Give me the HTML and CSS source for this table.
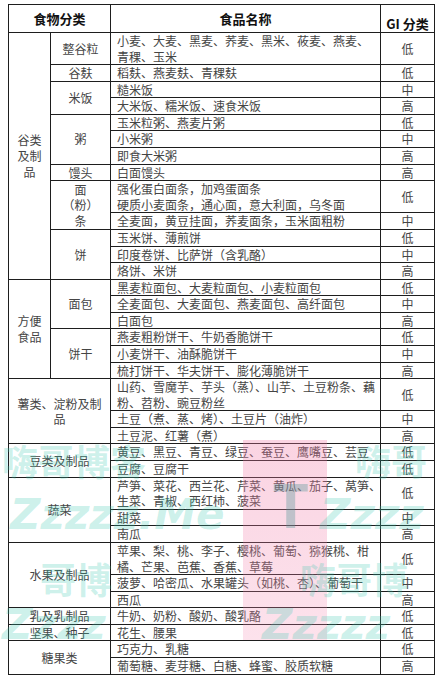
FILE: index.html
```html
<!DOCTYPE html>
<html lang="zh-CN">
<head>
<meta charset="utf-8">
<title>食物GI分类</title>
<link rel="stylesheet" href="styles.css">
</head>
<body>
<div class="page">
<table class="gi">
<colgroup><col class="w1"><col class="w2"><col class="w3"><col class="w4"></colgroup>
<thead>
<tr class="hr"><th colspan="2" class="ht">食物分类</th><th class="ht">食品名称</th><th class="hm">GI 分类</th></tr>
</thead>
<tbody>
<tr><td rowspan="13" class="c">谷类<br>及制<br>品</td><td class="c">整谷粒</td><td class="n"><span class="l">小麦、大麦、黑麦、荞麦、黑米、莜麦、燕麦、</span><span class="l">青稞、玉米</span></td><td class="g">低</td></tr>
<tr><td class="c">谷麸</td><td class="n">稻麸、燕麦麸、青稞麸</td><td class="g">低</td></tr>
<tr><td rowspan="2" class="c">米饭</td><td class="n">糙米饭</td><td class="g">中</td></tr>
<tr><td class="n">大米饭、糯米饭、速食米饭</td><td class="g">高</td></tr>
<tr><td rowspan="3" class="c">粥</td><td class="n">玉米粒粥、燕麦片粥</td><td class="g">低</td></tr>
<tr><td class="n">小米粥</td><td class="g">中</td></tr>
<tr><td class="n">即食大米粥</td><td class="g">高</td></tr>
<tr><td class="c">馒头</td><td class="n">白面馒头</td><td class="g">高</td></tr>
<tr><td rowspan="2" class="c">面<br>（粉）<br>条</td><td class="n"><span class="l">强化蛋白面条，加鸡蛋面条</span><span class="l">硬质小麦面条，通心面，意大利面，乌冬面</span></td><td class="g">低</td></tr>
<tr><td class="n">全麦面，黄豆挂面，荞麦面条，玉米面粗粉</td><td class="g">中</td></tr>
<tr><td rowspan="3" class="c">饼</td><td class="n">玉米饼、薄煎饼</td><td class="g">低</td></tr>
<tr><td class="n">印度卷饼、比萨饼（含乳酪）</td><td class="g">中</td></tr>
<tr><td class="n">烙饼、米饼</td><td class="g">高</td></tr>
<tr><td rowspan="6" class="c">方便<br>食品</td><td rowspan="3" class="c">面包</td><td class="n">黑麦粒面包、大麦粒面包、小麦粒面包</td><td class="g">低</td></tr>
<tr><td class="n">全麦面包、大麦面包、燕麦面包、高纤面包</td><td class="g">中</td></tr>
<tr><td class="n">白面包</td><td class="g">高</td></tr>
<tr><td rowspan="3" class="c">饼干</td><td class="n">燕麦粗粉饼干、牛奶香脆饼干</td><td class="g">低</td></tr>
<tr><td class="n">小麦饼干、油酥脆饼干</td><td class="g">中</td></tr>
<tr><td class="n">梳打饼干、华夫饼干、膨化薄脆饼干</td><td class="g">高</td></tr>
<tr><td rowspan="3" colspan="2" class="c">薯类、淀粉及制<br>品</td><td class="n"><span class="l">山药、雪魔芋、芋头（蒸）、山芋、土豆粉条、藕</span><span class="l">粉、苕粉、豌豆粉丝</span></td><td class="g">低</td></tr>
<tr><td class="n">土豆（煮、蒸、烤）、土豆片（油炸）</td><td class="g">中</td></tr>
<tr><td class="n">土豆泥、红薯（煮）</td><td class="g">高</td></tr>
<tr><td rowspan="2" colspan="2" class="c">豆类及制品</td><td class="n">黄豆、黑豆、青豆、绿豆、蚕豆、鹰嘴豆、芸豆</td><td class="g">低</td></tr>
<tr><td class="n">豆腐、豆腐干</td><td class="g">低</td></tr>
<tr><td rowspan="3" colspan="2" class="c">蔬菜</td><td class="n"><span class="l">芦笋、菜花、西兰花、芹菜、黄瓜、茄子、莴笋、</span><span class="l">生菜、青椒、西红柿、菠菜</span></td><td class="g">低</td></tr>
<tr><td class="n">甜菜</td><td class="g">中</td></tr>
<tr><td class="n">南瓜</td><td class="g">高</td></tr>
<tr><td rowspan="3" colspan="2" class="c">水果及制品</td><td class="n"><span class="l">苹果、梨、桃、李子、樱桃、葡萄、猕猴桃、柑</span><span class="l">橘、芒果、芭蕉、香蕉、草莓</span></td><td class="g">低</td></tr>
<tr><td class="n">菠萝、哈密瓜、水果罐头（如桃、杏）、葡萄干</td><td class="g">中</td></tr>
<tr><td class="n">西瓜</td><td class="g">高</td></tr>
<tr><td colspan="2" class="c">乳及乳制品</td><td class="n">牛奶、奶粉、酸奶、酸乳酪</td><td class="g">低</td></tr>
<tr><td colspan="2" class="c">坚果、种子</td><td class="n">花生、腰果</td><td class="g">低</td></tr>
<tr><td rowspan="2" colspan="2" class="c">糖果类</td><td class="n">巧克力、乳糖</td><td class="g">低</td></tr>
<tr><td class="n">葡萄糖、麦芽糖、白糖、蜂蜜、胶质软糖</td><td class="g">高</td></tr>
</tbody>
</table>
<div class="wm" aria-hidden="true">
<div class="pink"></div>
<span class="wt t1">嗨哥博客</span>
<span class="wt t2">嗨哥</span>
<span class="wt t3">T</span>
<span class="wz z1">Zzzzz.Me</span>
<span class="wz z2">Zzzz</span>
<span class="wt t4">哥博</span>
<span class="wt t5">嗨哥博</span>
<span class="wz z3">Zzzz</span>
<span class="wz z4">Zzzzz</span>
</div>
</div>
</body>
</html>
```
FILE: styles.css
```css
html, body {
  margin: 0;
  padding: 0;
  background: #ffffff;
}
.page {
  position: relative;
  width: 440px;
  height: 682px;
  overflow: hidden;
  padding: 4px 0 0 8px;
  box-sizing: border-box;
  font-family: "Noto Sans CJK SC", "Noto Sans", sans-serif;
}
.gi {
  border-collapse: collapse;
  table-layout: fixed;
  width: 426px;
  font-size: 12px;
  color: #454545;
}
.w1 { width: 42px; }
.w2 { width: 60px; }
.w3 { width: 270px; }
.w4 { width: 54px; }
.gi th, .gi td {
  border: 1px solid #1e1e1e;
  padding: 0 5px;
  line-height: 15.58px;
}
.gi .hr { height: 28px; }
.gi th {
  font-size: 13px;
  font-weight: 700;
  color: #111;
  text-align: center;
  line-height: 16px;
}
.gi th.ht { vertical-align: top; padding-top: 6px; }
.gi th.hm { vertical-align: top; padding-top: 11px; }
.gi td.c {
  text-align: center;
  vertical-align: middle;
}
.gi td.n {
  text-align: left;
  padding-left: 6px;
  white-space: nowrap;
}
.gi td.g {
  text-align: center;
}
.l { display: block; white-space: nowrap; }

.wm {
  position: absolute;
  left: 0;
  top: 0;
  width: 440px;
  height: 682px;
  pointer-events: none;
}
.pink {
  position: absolute;
  left: 243px;
  top: 440px;
  width: 84px;
  height: 200px;
  background: linear-gradient(180deg, rgba(240,120,165,0.32), rgba(245,140,180,0.25));
}
.wt, .wz {
  position: absolute;
  color: rgba(60, 200, 175, 0.26);
  font-weight: 700;
  white-space: nowrap;
}
.wt { font-size: 36px; font-family: "Noto Sans CJK SC", sans-serif; }
.wz { font-size: 42px; font-style: italic; font-family: "DejaVu Sans", sans-serif; }
.t1 { left: 2px; top: 434px; }
.t2 { left: 355px; top: 434px; }
.t3 { left: 272px; top: 458px; color: rgba(80, 150, 150, 0.35); font-size: 60px; }
.z1 { left: 10px; top: 490px; }
.z2 { left: 320px; top: 490px; }
.t4 { left: 40px; top: 552px; }
.t5 { left: 300px; top: 552px; }
.z3 { left: 2px; top: 600px; }
.z4 { left: 262px; top: 600px; }
```
